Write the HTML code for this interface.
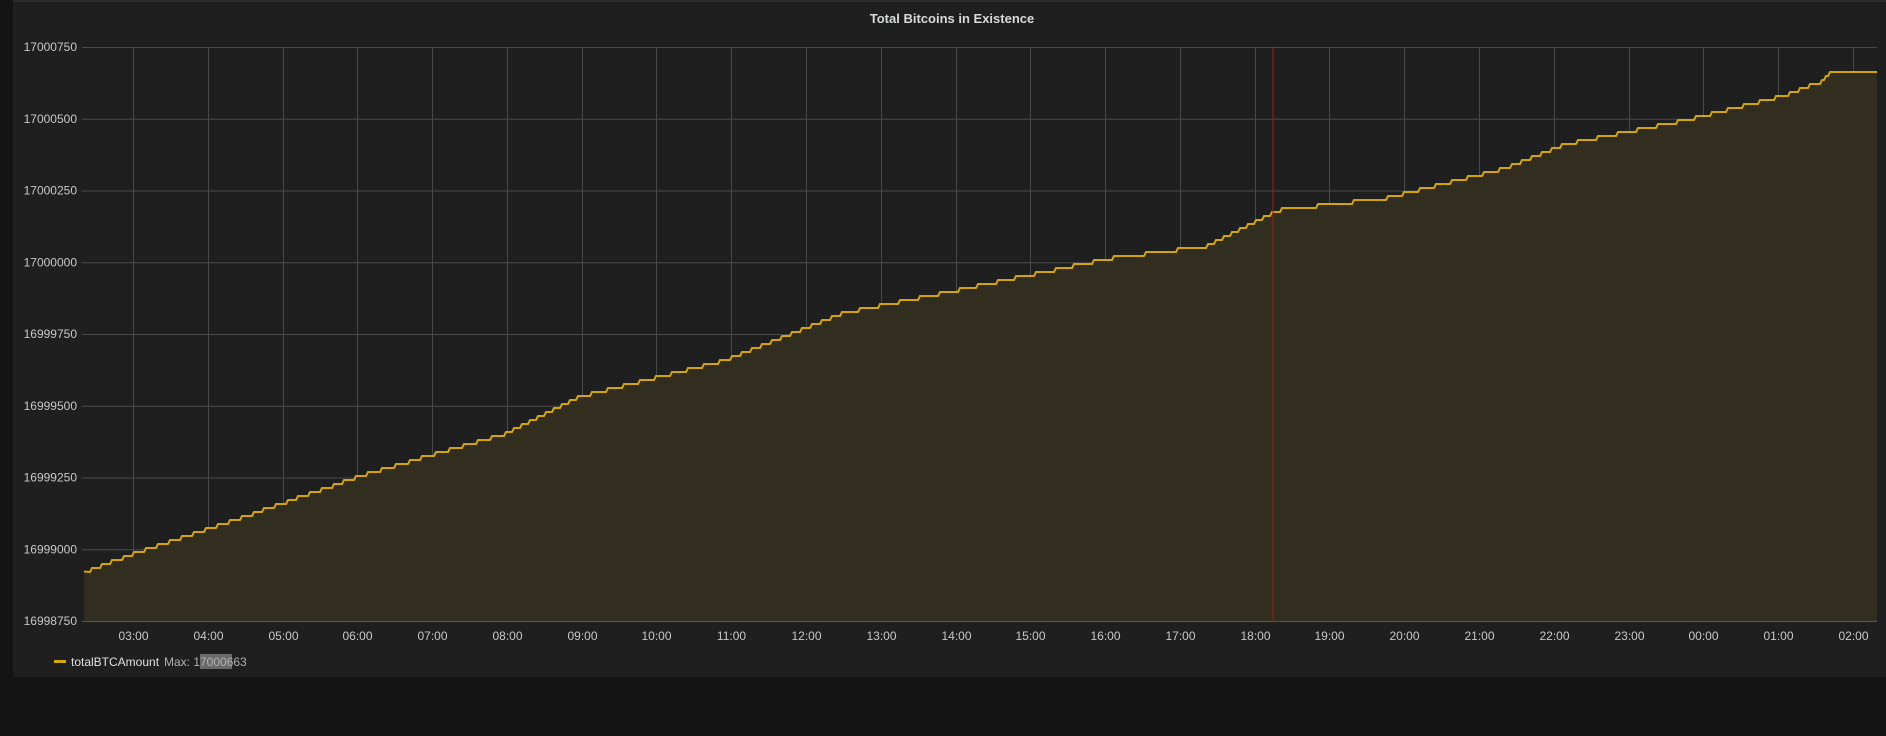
<!DOCTYPE html>
<html><head><meta charset="utf-8"><style>
html,body{margin:0;padding:0;background:#141414;width:1886px;height:736px;overflow:hidden;font-family:"Liberation Sans",sans-serif}
#panel{position:absolute;left:13px;top:0;width:1873px;height:677px;background:#1f1f1f;border-top:2px solid #2a2a2a;box-sizing:border-box}
.t{position:absolute;color:#d8d9da}
</style></head><body>
<div id="panel"></div>
<svg id="s" width="1886" height="736" style="position:absolute;left:0;top:0" xmlns="http://www.w3.org/2000/svg">
<text x="952" y="23" fill="#d8d9da" font-size="13" font-weight="bold" text-anchor="middle" font-family="Liberation Sans, sans-serif">Total Bitcoins in Existence</text>
<g id="grid" stroke="#4a4a4a" stroke-width="1"></g>
<g id="ylab" fill="#c8c8c8" font-size="12" text-anchor="end" font-family="Liberation Sans, sans-serif"></g>
<g id="xlab" fill="#c8c8c8" font-size="12" text-anchor="middle" font-family="Liberation Sans, sans-serif"></g>
<path id="area" fill="#312d1f" stroke="none"/>
<path id="line" fill="none" stroke="#d6a600" stroke-width="2"/>
<line x1="1273" y1="47" x2="1273" y2="621" stroke="#a51a1a" stroke-width="1"/>
<line x1="82" y1="621.5" x2="1877" y2="621.5" stroke="#555"/>
<rect x="54" y="660" width="12" height="3" fill="#d6a600"/>
<text x="71" y="666" fill="#e0e0e0" font-size="12" font-family="Liberation Sans, sans-serif">totalBTCAmount</text>
<rect x="200" y="654" width="32" height="15" fill="#6a6a6a"/>
<text x="164" y="666" fill="#b0b0b0" font-size="12" font-family="Liberation Sans, sans-serif">Max: 17000663</text>
</svg>
<script>
var ns="http://www.w3.org/2000/svg";
function el(p,t,a,tx){var e=document.createElementNS(ns,t);for(var k in a)e.setAttribute(k,a[k]);if(tx)e.textContent=tx;document.getElementById(p).appendChild(e);}
var labs=["17000750","17000500","17000250","17000000","16999750","16999500","16999250","16999000","16998750"];
for(var i=0;i<9;i++){var y=47+i*71.75;if(i<8)el("grid","line",{x1:82,x2:1877,y1:y+0.5,y2:y+0.5});el("ylab","text",{x:77,y:y+4},labs[i]);}
var hrs=["03:00","04:00","05:00","06:00","07:00","08:00","09:00","10:00","11:00","12:00","13:00","14:00","15:00","16:00","17:00","18:00","19:00","20:00","21:00","22:00","23:00","00:00","01:00","02:00"];
for(var i=0;i<24;i++){var x=Math.round(133+i*74.78)+0.5;el("grid","line",{x1:x,x2:x,y1:47,y2:621});el("xlab","text",{x:x,y:640},hrs[i]);}
var pts=[[70,475],[110,460],[200,430],[300,395],[420,360],[480,330],[600,300],[700,260],[800,240],[920,215],[1000,205],[1060,175],[1150,165],[1250,140],[1300,120],[1400,100],[1480,80],[1512,68],[1518,61],[1562,61]];
pts=pts.map(function(p){return [p[0]*1.203,p[1]*1.203];});
function yat(x){for(var i=0;i<pts.length-1;i++){if(x<=pts[i+1][0]){var a=pts[i],b=pts[i+1];return a[1]+(b[1]-a[1])*(x-a[0])/(b[0]-a[0]);}}return pts[pts.length-1][1];}
var d="M84 "+yat(84).toFixed(1),prev=Math.round(yat(84)/4)*4,x;
for(x=84;x<=1877;x+=2){var q=Math.round(yat(x)/4)*4;if(q!==prev){d+=" L"+x+" "+prev+" L"+(x+2)+" "+q;prev=q;x+=2;}}
d+=" L1877 "+prev;
document.getElementById("line").setAttribute("d",d);
document.getElementById("area").setAttribute("d",d+" L1877 621 L84 621 Z");
</script>
</body></html>
